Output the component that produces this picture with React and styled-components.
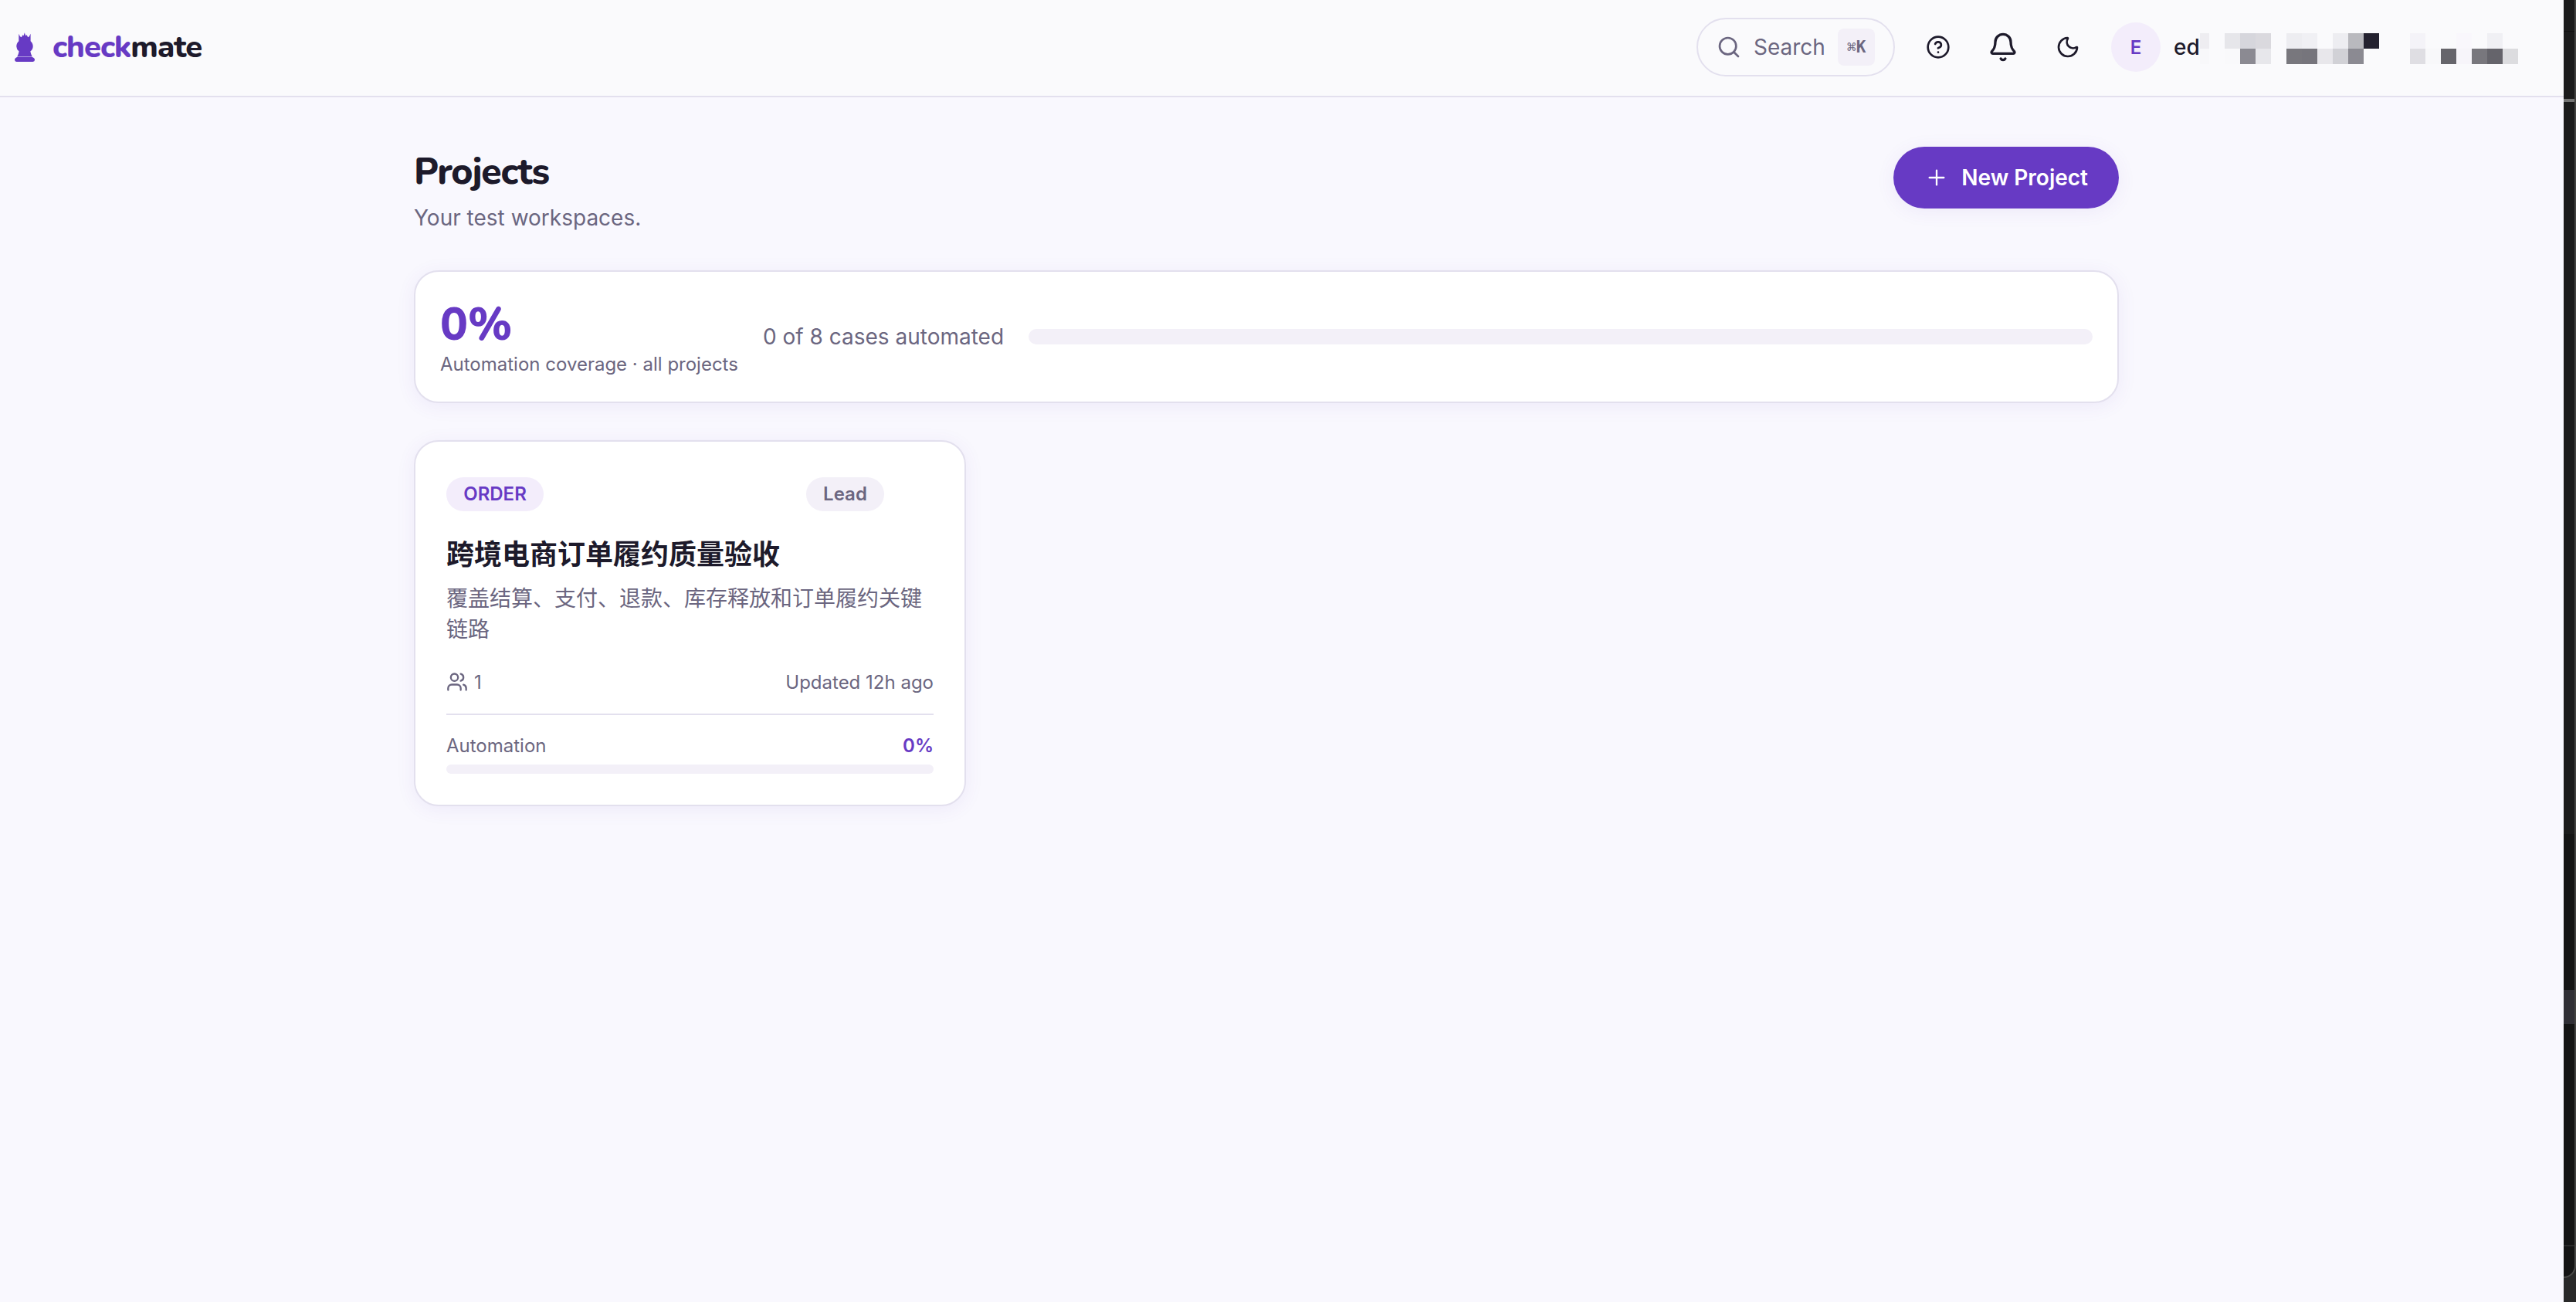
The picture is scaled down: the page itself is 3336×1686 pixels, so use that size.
import React from 'react';
import styled, { createGlobalStyle } from 'styled-components';
import { Bell, CircleQuestionMark, Moon, Plus, Search, Users } from 'lucide-react';

const colors = {
  purple: '#673ac4',
  purpleSoft: '#f3edfb',
  ink: '#1d1a2b',
  muted: '#6b6680',
  border: '#e3e0ee',
  surface: '#f3f0f8',
  page: '#f9f8fe',
  header: '#fafafc',
  white: '#ffffff',
};

const displayFont = "'Nunito', 'Open Sans', sans-serif";
const bodyFont = "'Inter', 'Noto Sans CJK SC', sans-serif";

const GlobalStyle = createGlobalStyle`
  * {
    box-sizing: border-box;
  }

  body {
    margin: 0;
    overflow: hidden;
    font-family: ${bodyFont};
    color: ${colors.ink};
    background: ${colors.page};
  }

  h1, h2, p {
    margin: 0;
  }

  button {
    font-family: inherit;
    margin: 0;
  }
`;

const Screen = styled.div`
  display: flex;
  width: 3336px;
  height: 1686px;
  overflow: hidden;
`;

const Page = styled.div`
  width: 3320px;
  height: 100%;
  background: ${colors.page};
`;

const Header = styled.header`
  display: flex;
  align-items: center;
  justify-content: space-between;
  height: 126px;
  padding: 0 59px 2px 16px;
  background: ${colors.header};
  border-bottom: 2px solid ${colors.border};
`;

const Brand = styled.div`
  display: flex;
  align-items: center;
  gap: 20px;
`;

const Wordmark = styled.span`
  font-family: ${displayFont};
  font-weight: 800;
  font-size: 40px;
  line-height: 44px;
  letter-spacing: -0.025em;
  color: ${(props) => (props.$accent ? colors.purple : colors.ink)};
`;

const HeaderActions = styled.div`
  display: flex;
  align-items: center;
`;

const SearchBox = styled.button`
  display: flex;
  align-items: center;
  width: 257px;
  height: 76px;
  margin-right: 14px;
  padding: 0 24px;
  border: 2px solid ${colors.border};
  border-radius: 38px;
  background: transparent;
  color: ${colors.muted};
  font-size: 28px;
`;

const SearchLabel = styled.span`
  width: 93px;
  margin: 0 16px;
  text-align: left;
`;

const Shortcut = styled.kbd`
  display: flex;
  align-items: center;
  justify-content: center;
  width: 48px;
  height: 48px;
  border-radius: 8px;
  background: ${colors.surface};
  font-family: 'DejaVu Sans Mono', monospace;
  font-size: 21px;
  font-weight: 700;
`;

const CommandKey = styled.span`
  font-size: 20px;
  font-weight: 400;
`;

const IconButton = styled.span`
  display: flex;
  align-items: center;
  justify-content: center;
  width: 84px;
  height: 80px;
  color: ${colors.ink};
`;

const Avatar = styled.span`
  display: flex;
  align-items: center;
  justify-content: center;
  width: 64px;
  height: 64px;
  margin-left: 14px;
  border-radius: 50%;
  background: ${colors.purpleSoft};
  color: ${colors.purple};
  font-size: 24px;
  font-weight: 600;
`;

const UserName = styled.span`
  width: 34px;
  margin-left: 17px;
  font-size: 28px;
  font-weight: 500;
`;

const Mosaic = styled.span`
  display: grid;
  grid-template-columns: 12px repeat(20, 20px);
  grid-template-rows: 20px 20px;
  margin-top: 4px;
`;

const Tile = styled.i`
  background: ${(props) => props.$color};
`;

const Main = styled.main`
  width: 2208px;
  margin: 64px 0 0 536px;
`;

const TitleRow = styled.div`
  display: flex;
  justify-content: space-between;
  align-items: flex-start;
  height: 160px;
`;

const Title = styled.h1`
  font-family: ${displayFont};
  font-size: 48px;
  font-weight: 800;
  line-height: 64px;
  letter-spacing: -0.025em;
`;

const Subtitle = styled.p`
  margin-top: 8px;
  font-size: 28px;
  line-height: 40px;
  color: ${colors.muted};
`;

const NewButton = styled.button`
  display: flex;
  align-items: center;
  gap: 16px;
  height: 80px;
  padding: 0 40px;
  border: 0;
  border-radius: 40px;
  background: ${colors.purple};
  color: ${colors.white};
  font-size: 28px;
  font-weight: 600;
  box-shadow: 0 4px 24px rgba(103, 58, 196, 0.08);
`;

const Card = styled.section`
  background: ${colors.white};
  border: 2px solid ${colors.border};
  border-radius: 32px;
  box-shadow: 0 4px 24px rgba(103, 58, 196, 0.08);
`;

const CoverageCard = styled(Card)`
  display: flex;
  align-items: center;
  gap: 32px;
  height: 172px;
  padding: 0 32px;
`;

const CoverageValue = styled.p`
  font-family: ${displayFont};
  font-size: 60px;
  font-weight: 800;
  line-height: 71px;
  color: ${colors.purple};
`;

const CoverageLabel = styled.p`
  width: 386px;
  font-size: 24px;
  line-height: 32px;
  white-space: nowrap;
  color: ${colors.muted};
`;

const CoverageCount = styled.p`
  width: 312px;
  font-size: 28px;
  white-space: nowrap;
  color: ${colors.muted};
`;

const Track = styled.div`
  flex: 1;
  height: 20px;
  border-radius: 10px;
  background: ${colors.surface};
`;

const ProjectCard = styled(Card)`
  width: 715px;
  height: 474px;
  margin-top: 48px;
  padding: 46px 40px 0;
`;

const BadgeRow = styled.div`
  display: flex;
  justify-content: space-between;
  padding-right: 64px;
`;

const Badge = styled.span`
  display: flex;
  align-items: center;
  justify-content: center;
  width: ${(props) => props.$width}px;
  height: 44px;
  padding-bottom: 1px;
  border-radius: 22px;
  font-size: 24px;
  font-weight: 600;
  background: ${(props) => (props.$accent ? colors.purpleSoft : colors.surface)};
  color: ${(props) => (props.$accent ? colors.purple : colors.muted)};
`;

const ProjectName = styled.h2`
  margin-top: 29px;
  font-size: 36px;
  font-weight: 600;
  line-height: 54px;
`;

const ProjectText = styled.p`
  margin-top: 10px;
  font-size: 28px;
  line-height: 40px;
  color: ${colors.muted};
`;

const MetaRow = styled.div`
  display: flex;
  align-items: center;
  justify-content: space-between;
  height: 32px;
  margin-top: ${(props) => props.$top}px;
  font-size: 24px;
  color: ${colors.muted};
`;

const Members = styled.span`
  display: flex;
  align-items: center;
  gap: 8px;
`;

const Percent = styled.span`
  font-weight: 600;
  color: ${colors.purple};
`;

const Divider = styled.div`
  height: 2px;
  margin-top: 25px;
  background: ${colors.border};
`;

const SlimTrack = styled.div`
  height: 12px;
  margin-top: 9px;
  border-radius: 6px;
  background: ${colors.surface};
`;

const WindowEdge = styled.aside`
  display: flex;
  flex-direction: column;
  width: 16px;
  height: 100%;
  background: #292929;
`;

const EdgeBand = styled.div`
  height: ${(props) => props.$height}px;
  background: ${(props) => props.$color};
  border-right: 2px solid #434341;
`;

const EdgeCorner = styled.div`
  height: 41px;
  background: #141414;
  border: solid #4a4a48;
  border-width: 0 2px 2px 0;
  border-radius: 0 0 16px 0;
`;

const mosaicRows = [
  ['#eeedf1', '', '#e6e6ea', '#d6d6dc', '#dad9de', '', '#ededf1', '#f0f0f4', '', '#ededf1', '#b9b9be', '#242230', '', '', '#f4f3f8', '', '', '#f9f7fc', '', '#f0f0f4', ''],
  ['#f8f8fa', '', '#f9f9fb', '#8b8a92', '#e7e7eb', '', '#78777d', '#76757c', '#e8e7eb', '#d1d1d6', '#8b8a92', '#fafafc', '', '', '#dfdee3', '#f8f8fa', '#66656b', '#f7f5fa', '#78777d', '#65646b', '#dcdcdf'],
];

const edgeBands = [
  [40, '#1b1b1b'],
  [1, '#101010'],
  [87, '#1b1b1b'],
  [4, '#747473'],
  [948, '#1b1b1b'],
  [202, '#141414'],
  [44, '#302f35'],
  [286, '#141414'],
  [2, '#2a2a2a'],
];

const RookLogo = () => (
  <svg width="32" height="44" viewBox="0 0 32 44" fill={colors.purple}>
    <path d="M8.3 4.8 L10 8.2 L11.8 9.2 L13.4 6.2 L14.6 7.2 L15.8 3.2 L17.2 7.2 L18.6 6.2 L20.2 9.2 L21.8 8.2 L23.6 4.8 V14.2 Q26.8 17 26.7 21.2 Q26.6 25 23.3 27.6 Q24 31.4 25.8 34.5 H6.2 Q8 31.4 8.6 27.6 Q5.4 25 5.3 21.2 Q5.2 17 8.3 14.2 Z" />
    <path d="M6 34.9 H26 Q29 36 29 38.6 Q29 41 26.6 41 H5.4 Q3 41 3 38.6 Q3 36 6 34.9 Z" />
  </svg>
);

const App = () => (
  <Screen>
    <GlobalStyle />
    <Page>
      <Header>
        <Brand>
          <RookLogo />
          <span>
            <Wordmark $accent>check</Wordmark>
            <Wordmark>mate</Wordmark>
          </span>
        </Brand>
        <HeaderActions>
          <SearchBox>
            <Search size={32} />
            <SearchLabel>Search</SearchLabel>
            <Shortcut><CommandKey>⌘</CommandKey>K</Shortcut>
          </SearchBox>
          <IconButton><CircleQuestionMark size={32} /></IconButton>
          <IconButton><Bell size={40} /></IconButton>
          <IconButton><Moon size={32} /></IconButton>
          <Avatar>E</Avatar>
          <UserName>ed</UserName>
          <Mosaic>
            {mosaicRows.map((row, y) => row.map((color, x) => (
              <Tile key={`${y}-${x}`} $color={color || 'transparent'} />
            )))}
          </Mosaic>
        </HeaderActions>
      </Header>
      <Main>
        <TitleRow>
          <div>
            <Title>Projects</Title>
            <Subtitle>Your test workspaces.</Subtitle>
          </div>
          <NewButton>
            <Plus size={32} strokeWidth={1.75} />
            New Project
          </NewButton>
        </TitleRow>
        <CoverageCard>
          <div>
            <CoverageValue>0%</CoverageValue>
            <CoverageLabel>Automation coverage · all projects</CoverageLabel>
          </div>
          <CoverageCount>0 of 8 cases automated</CoverageCount>
          <Track />
        </CoverageCard>
        <ProjectCard>
          <BadgeRow>
            <Badge $accent $width={126}>ORDER</Badge>
            <Badge $width={101}>Lead</Badge>
          </BadgeRow>
          <ProjectName>跨境电商订单履约质量验收</ProjectName>
          <ProjectText>覆盖结算、支付、退款、库存释放和订单履约关键链路</ProjectText>
          <MetaRow $top={32}>
            <Members><Users size={28} />1</Members>
            <span>Updated 12h ago</span>
          </MetaRow>
          <Divider />
          <MetaRow $top={23}>
            <span>Automation</span>
            <Percent>0%</Percent>
          </MetaRow>
          <SlimTrack />
        </ProjectCard>
      </Main>
    </Page>
    <WindowEdge>
      {edgeBands.map(([height, color], i) => (
        <EdgeBand key={i} $height={height} $color={color} />
      ))}
      <EdgeCorner />
    </WindowEdge>
  </Screen>
);

export default App;
